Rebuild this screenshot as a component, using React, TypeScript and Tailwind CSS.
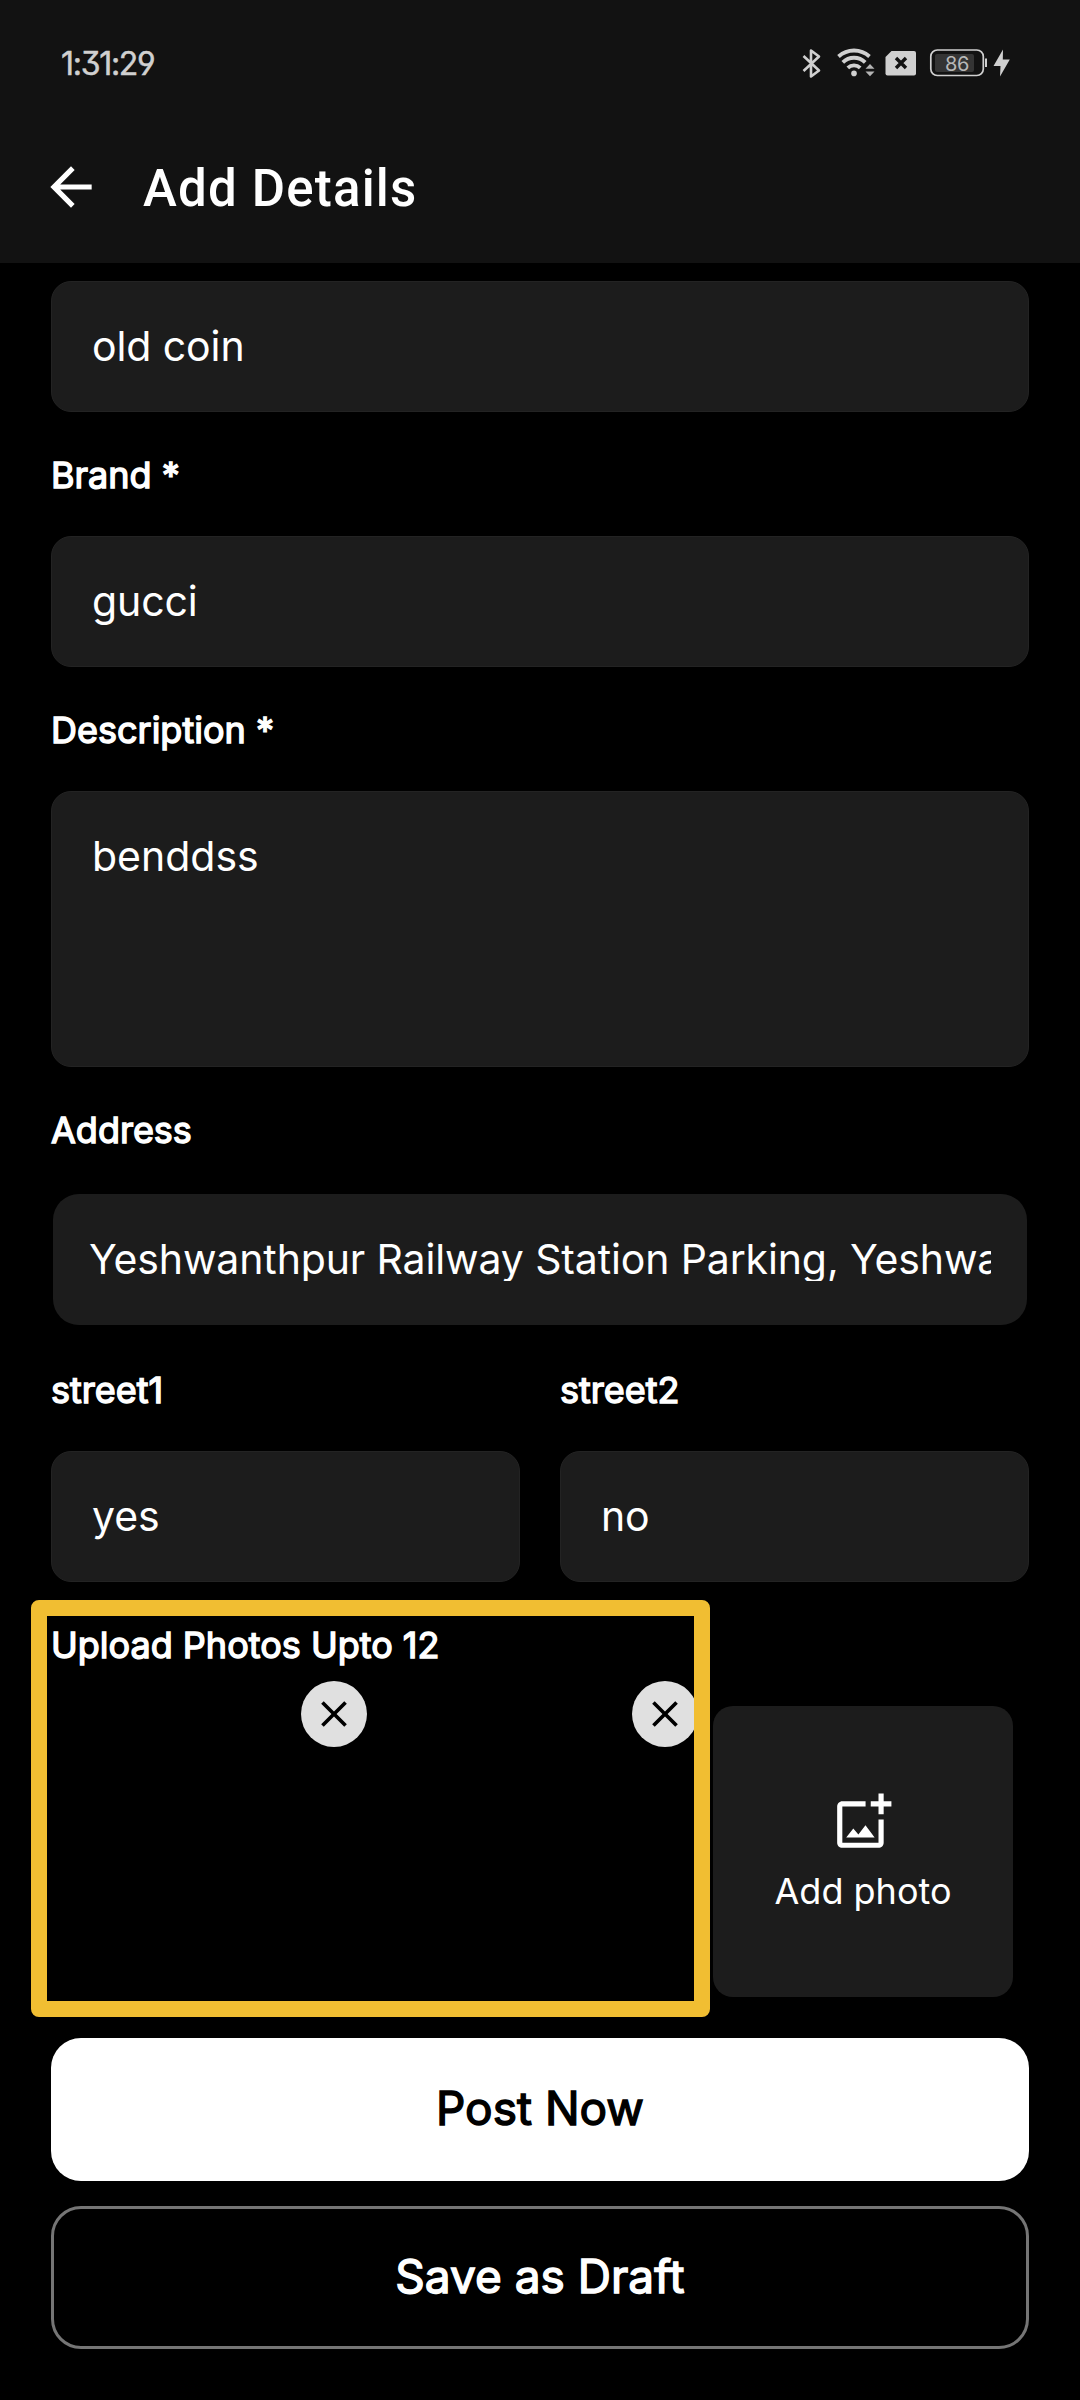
import type { ReactNode } from "react"
import { MdArrowBack, MdClose, MdOutlineAddPhotoAlternate } from "react-icons/md"

// Two uploaded photos, both still blank
const PHOTOS = ["photo-1", "photo-2"]

function StatusBar() {
    return (
        <div className="flex h-[126px] items-center justify-between pl-[61px] pr-[70px] text-[#d0d0d0]">
            <span className="pt-[1px] text-[32px] font-normal leading-none tracking-[-1.3px] [-webkit-text-stroke:0.5px_#d0d0d0] [font-feature-settings:'cv03','cv04','cv09']">
                1:31:29
            </span>

            <svg width="208" height="32" viewBox="802 47 208 32" fill="none">
                {/* Bluetooth */}
                <path
                    d="M803.5 56 819 70.5 811 76.5V50.5L819 56.5 803.5 71"
                    stroke="currentColor"
                    strokeWidth="2.6"
                    strokeLinejoin="round"
                />

                {/* Wifi with traffic arrows */}
                <path
                    d="M838.5 56.5a23 23 0 0 1 31 0M842.8 62.3a16 16 0 0 1 22.4 0M847.8 67.8a9 9 0 0 1 12.4 0"
                    stroke="currentColor"
                    strokeWidth="3.8"
                />
                <circle cx="854" cy="73.4" r="2.8" fill="currentColor" />
                <path d="m865.5 68.8 4.5-4.8 4.5 4.8zM865.5 71.5h9l-4.5 4.8z" fill="#b4b4b4" />

                {/* SIM card */}
                <path
                    d="M891.5 51H914a2 2 0 0 1 2 2v20.5a2 2 0 0 1-2 2h-26.5a2 2 0 0 1-2-2V57z"
                    fill="currentColor"
                />
                <path d="m896 58 10 10m0-10-10 10" stroke="#121212" strokeWidth="3.4" />

                {/* Battery */}
                <rect x="930.8" y="50" width="52.5" height="25.5" rx="6.5" stroke="currentColor" strokeWidth="1.7" />
                <rect x="935" y="54" width="39" height="18" rx="2" fill="#343434" />
                <path d="M986 58.5v8.5" stroke="currentColor" strokeWidth="2" />
                <text x="957" y="70.5" textAnchor="middle" fontSize="20" letterSpacing="-0.5" fill="#b8b8b8">
                    86
                </text>

                {/* Charging bolt */}
                <path d="M1003 49.5 993.5 66h7l-.5 10.5 9.8-17h-7z" fill="currentColor" />
            </svg>
        </div>
    )
}

function Label({ children }: { children: ReactNode }) {
    return (
        <div className="whitespace-pre text-[36px] leading-none text-white [-webkit-text-stroke:1.4px_#fff]">
            {children}
        </div>
    )
}

function Field({ value }: { value: string }) {
    return (
        <div className="flex h-[131px] items-center rounded-[20px] border border-[#232323] bg-[#1c1c1c] px-[40px] text-[41px] leading-none tracking-[-0.1px] text-white">
            {value}
        </div>
    )
}

export default function App() {
    return (
        <div className="h-[2400px] w-[1080px] overflow-hidden bg-black font-['Inter',sans-serif]">
            <header className="h-[263px] bg-[#121212]">
                <StatusBar />
                <div className="flex h-[121px] items-center pl-[40px]">
                    <MdArrowBack className="size-[62px] text-white" />
                    <h1 className="ml-[41px] pt-[3px] font-['Roboto',sans-serif] text-[51px] font-medium leading-none tracking-[1.2px] text-white">
                        Add Details
                    </h1>
                </div>
            </header>

            <main className="flex flex-col px-[51px] pt-[18px]">
                <Field value="old coin" />

                <div className="flex h-[124px] items-center pt-[2px]">
                    <Label>Brand *</Label>
                </div>
                <Field value="gucci" />

                <div className="flex h-[124px] items-center pt-[2px]">
                    <Label>Description *</Label>
                </div>
                <div className="h-[276px] rounded-[20px] border border-[#232323] bg-[#1c1c1c] px-[40px] pt-[44px] text-[41px] leading-none text-white">
                    benddss
                </div>

                <div className="flex h-[127px] items-center pb-[2px]">
                    <Label>Address</Label>
                </div>
                <div className="mx-[2px] h-[131px] rounded-[26px] bg-[#1c1c1c] px-[36px] pt-[43px]">
                    {/* Single line, cut off at both the right edge and the descenders */}
                    <div className="h-[44px] w-[902px] overflow-hidden whitespace-nowrap text-[41px] leading-[44px] tracking-[-0.13px] text-white">
                        Yeshwanthpur Railway Station Parking, Yeshwa
                    </div>
                </div>

                <div className="grid grid-cols-2 gap-x-[40px]">
                    <div className="flex h-[126px] items-center pt-[3px]">
                        <Label>street1</Label>
                    </div>
                    <div className="flex h-[126px] items-center pt-[3px]">
                        <Label>street2</Label>
                    </div>
                    <Field value="yes" />
                    <Field value="no" />
                </div>

                {/* Upload section */}
                <section className="relative h-[456px]">
                    <div className="flex h-[124px] items-center pt-[2px]">
                        <Label>Upload Photos Upto 12</Label>
                    </div>
                    <div className="flex gap-[30px]">
                        {PHOTOS.map((photo) => (
                            <div key={photo} className="relative h-[291px] w-[301px]">
                                <button className="absolute -right-[15px] -top-[25px] flex size-[66px] items-center justify-center rounded-full bg-[#e0e0e0]">
                                    <MdClose className="size-[44px] text-black" />
                                </button>
                            </div>
                        ))}
                        <button className="flex h-[291px] w-[300px] flex-col items-center rounded-[20px] bg-[#1c1c1c] pt-[85px] text-white">
                            <MdOutlineAddPhotoAlternate className="size-[62px]" />
                            <span className="mt-[20px] text-[36px] leading-none">Add photo</span>
                        </button>
                    </div>

                    {/* Highlight frame over the photo slots */}
                    <div className="absolute -left-[20px] top-[18px] h-[417px] w-[679px] rounded-[8px] border-[16px] border-[#f1be32]" />
                </section>

                <button className="h-[143px] rounded-[30px] bg-white pb-[3px] text-[46px] leading-none text-black [-webkit-text-stroke:1.4px_#000]">
                    Post Now
                </button>
                <button className="mt-[25px] h-[143px] rounded-[30px] border-[3px] border-[#757575] pb-[3px] text-[46px] leading-none text-white [-webkit-text-stroke:1.4px_#fff]">
                    Save as Draft
                </button>
            </main>
        </div>
    )
}
